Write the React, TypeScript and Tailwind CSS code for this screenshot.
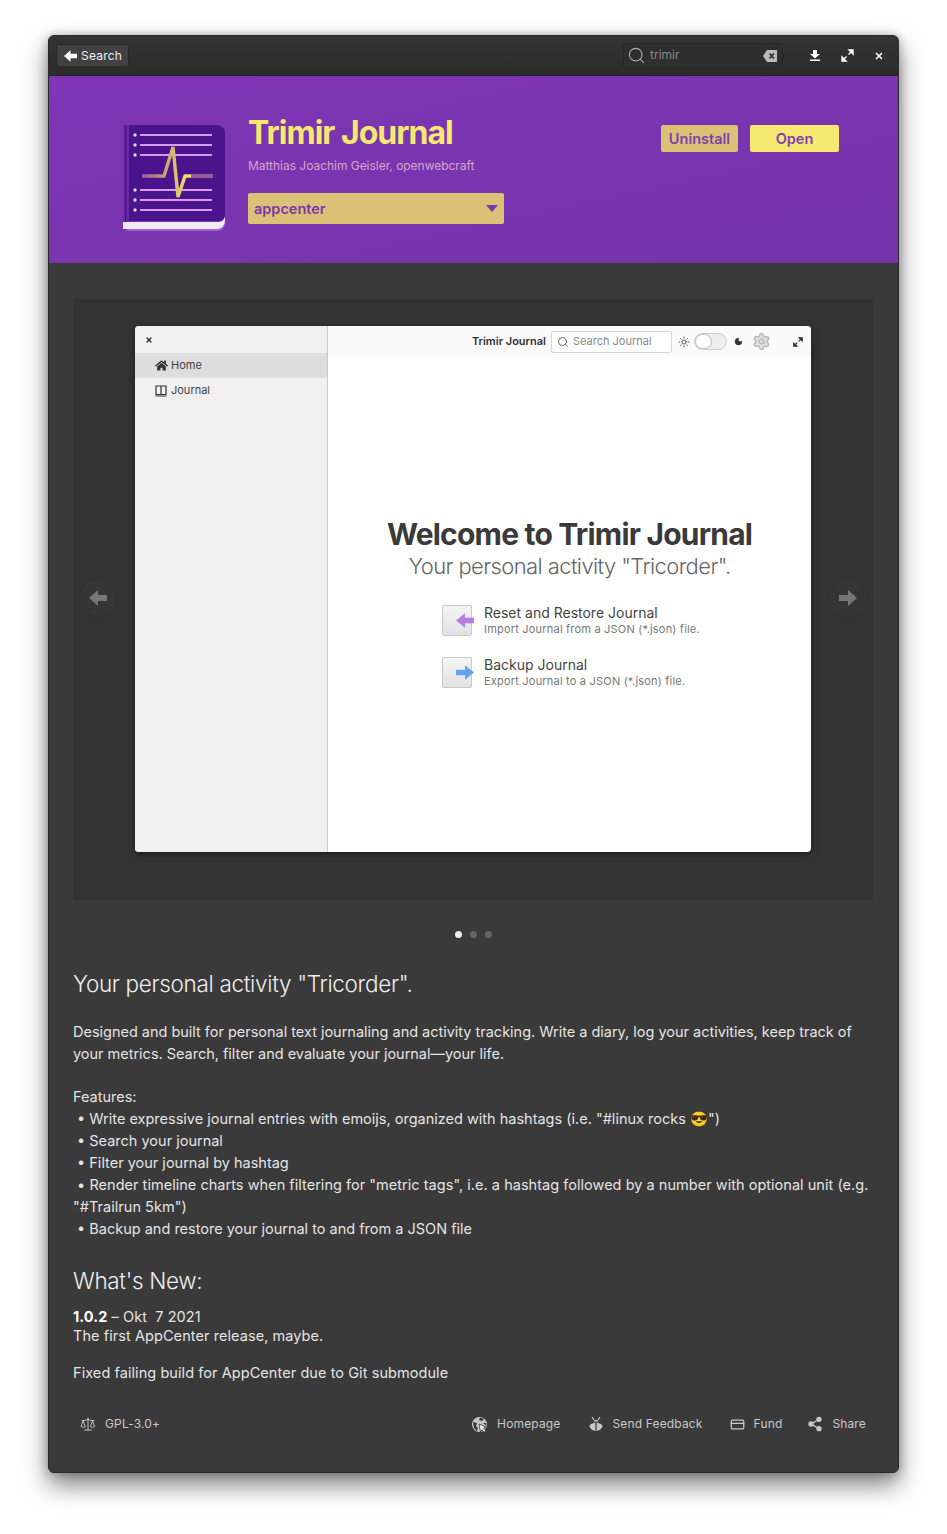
import { Search, X, Settings, Sun, Moon, Share2, CreditCard, Scale } from "lucide-react";
import { FaHome } from "react-icons/fa";

const features = [
  "Search your journal",
  "Filter your journal by hashtag",
];

function FatArrow({ right, width, height, color }: { right?: boolean; width: number; height: number; color: string }) {
  return (
    <svg width={width} height={height} viewBox="0 0 18 16" className={right ? "rotate-180" : ""}>
      <path d="M0 8L9 0V5H18V11H9V16Z" fill={color} />
    </svg>
  );
}

function BookIcon() {
  return (
    <svg width="104" height="108" viewBox="0 0 104 108" className="shrink-0">
      <defs>
        <linearGradient id="pulse" gradientUnits="userSpaceOnUse" x1="18" y1="0" x2="68" y2="0">
          <stop offset="0" stopColor="#9a5a9c" />
          <stop offset="0.5" stopColor="#c9a475" />
          <stop offset="0.8" stopColor="#e6cf68" />
          <stop offset="1" stopColor="#f5e66e" />
        </linearGradient>
      </defs>
      <path d="M4 100H92a9 9 0 0 0 10-9V99a8 8 0 0 1-9 7H4Z" fill="#a565cf" />
      <path d="M0 97H94a7 7 0 0 0 8-6V96a8 8 0 0 1-9 8H0Z" fill="#efeaf1" />
      <path d="M0 0H94a8 8 0 0 1 8 8V90a6 6 0 0 1-6 6H0Z" fill="#4a148c" />
      <rect x="0" y="0" width="6" height="97" fill="#6a2aa8" />
      <rect x="2" y="0" width="1.5" height="97" fill="#4a148c" />
      {[10, 20, 30, 65, 75, 85].map((y) => (
        <g key={y}>
          <circle cx="12" cy={y} r="1.7" fill="#e0d5ea" />
          <rect x="17" y={y - 1} width="72" height="2" fill="#d89bf0" />
        </g>
      ))}
      <rect x="68" y="49" width="22" height="4" fill="#965a95" />
      <path d="M19 51H41L50 22L55 72L62 51H68" fill="none" stroke="url(#pulse)" strokeWidth="3.4" />
    </svg>
  );
}

function NavArrow({ right }: { right?: boolean }) {
  return (
    <div className="mt-[18px] flex h-[38px] w-[38px] items-center justify-center rounded-full bg-[#353535] shadow-[0_0_1px_#2c2c2c]">
      <FatArrow right={right} width={18} height={16} color="#777777" />
    </div>
  );
}

function FooterLink({ icon, label }: { icon: React.ReactNode; label: string }) {
  return (
    <div className="flex items-center gap-[9px]">
      {icon}
      <span className="text-[12px] tracking-[0.15px] text-[#c8c8c8]">{label}</span>
    </div>
  );
}

function ActionRow({ title, sub, color, right }: { title: string; sub: string; color: string; right?: boolean }) {
  return (
    <div className="flex h-[32px] items-start gap-[12px] whitespace-nowrap">
      <div className="relative h-[31px] w-[30px] shrink-0 rounded-[2px] border border-[#c8c8c8] bg-gradient-to-b from-[#f4f4f4] to-[#e2e2e2]">
        <svg width="18" height="15" viewBox="0 0 20 16" className="absolute left-[13px] top-[7px]">
          {right ? (
            <path d="M0 5H10V0L20 8L10 16V11H0Z" fill={color} />
          ) : (
            <path d="M20 5H10V0L0 8L10 16V11H20Z" fill={color} />
          )}
        </svg>
      </div>
      <div>
        <div className="text-[14px] leading-[16px] text-[#444]">{title}</div>
        <div className="mt-[1px] text-[11px] leading-[14px] tracking-[0.2px] text-[#777]">{sub}</div>
      </div>
    </div>
  );
}

function ScreenshotWindow() {
  return (
    <div className="flex h-[526px] w-[676px] overflow-hidden rounded-[4px] bg-white shadow-[0_2px_6px_rgba(0,0,0,0.45)]">
      <div className="w-[193px] shrink-0 border-r border-[#c9c9c9] bg-[#f0f0f0] text-[11px] text-[#444]">
        <div className="flex h-[27px] items-center pl-[10px]">
          <X size={8} strokeWidth={4} className="text-[#333]" />
        </div>
        <div className="flex h-[25px] items-center gap-[3px] bg-[#dddddd] pl-[20px]">
          <FaHome size={13} className="text-[#333]" />
          <span>Home</span>
        </div>
        <div className="flex h-[25px] items-center gap-[4px] pl-[20px]">
          <svg width="12" height="12" viewBox="0 0 12 12" fill="none" stroke="#333" strokeWidth="1.2">
            <path d="M1 1H11V9.5H1ZM6 1V9.5M0.5 11H11.5" />
          </svg>
          <span>Journal</span>
        </div>
      </div>
      <div className="flex min-w-0 flex-1 flex-col">
        <div className="flex h-[31px] items-center justify-end bg-[#fafafa] pr-[8px]">
          <span className="mr-[5px] text-[11px] font-semibold text-[#333]">Trimir Journal</span>
          <div className="flex h-[22px] w-[121px] items-center gap-[4px] rounded-[2px] border border-[#d5d5d5] bg-white pl-[5px]">
            <Search size={12} className="text-[#666]" />
            <span className="text-[11px] text-[#888]">Search Journal</span>
          </div>
          <Sun size={12} className="ml-[6px] text-[#555]" />
          <div className="ml-[4px] flex h-[17px] w-[33px] items-center rounded-full border border-[#ccc] bg-[#eee]">
            <div className="h-[15px] w-[17px] rounded-full border border-[#bbb] bg-white" />
          </div>
          <Moon size={9} fill="#333" className="ml-[7px] text-[#333]" />
          <Settings size={19} fill="#e2e2e2" className="ml-[9px] text-[#bbb]" />
          <svg width="10" height="10" viewBox="0 0 13 13" fill="#333" stroke="#333" strokeWidth="1.6" className="ml-[22px]">
            <path d="M8 1H12V5ZM1 8V12H5ZM10 3L7.5 5.5M3 10L5.5 7.5" />
          </svg>
        </div>
        <div className="flex flex-1 flex-col items-center pt-[159px]">
          <h2 className="text-[30px] font-bold leading-[36px] tracking-[-0.8px] text-[#3a3a3a]">Welcome to Trimir Journal</h2>
          <p className="text-[22px] font-light leading-[28px] tracking-[-0.6px] text-[#666]">Your personal activity "Tricorder".</p>
          <div className="mt-[25px] ml-[114px] flex w-[258px] flex-col gap-[20px] self-start">
            <ActionRow color="#b57ee5" title="Reset and Restore Journal" sub="Import Journal from a JSON (*.json) file." />
            <ActionRow right color="#64a4ed" title="Backup Journal" sub="Export Journal to a JSON (*.json) file." />
          </div>
        </div>
      </div>
    </div>
  );
}

export default function App() {
  return (
    <div className="min-h-[1534px] bg-white pl-[48px] pt-[35px] font-['Inter',sans-serif]">
      <div className="flex h-[1438px] w-[851px] flex-col overflow-hidden rounded-[6px] border border-[#2a2a2a] bg-[#3a3a3a] shadow-[0_12px_24px_rgba(0,0,0,0.5),0_0_10px_rgba(0,0,0,0.25)]">
        {/* titlebar */}
        <div className="flex h-[40px] shrink-0 items-center justify-between border-b border-[#27212b] bg-gradient-to-b from-[#343434] to-[#2b2b2b] pl-[7px] pr-[14px]">
          <button className="flex h-[23px] w-[73px] items-center gap-[4px] rounded-[3px] border border-[#282828] bg-[#414141] pl-[7px] text-[12px] tracking-[0.2px] text-[#eee]">
            <FatArrow width={13} height={12} color="#ffffff" />
            <span>Search</span>
          </button>
          <div className="flex items-center">
            <div className="flex h-[26px] w-[160px] items-center rounded-[3px] border border-[#262626] bg-[#2e2e2e] pl-[3px] pr-[5px]">
              <Search size={19} strokeWidth={1.4} className="text-[#aaa]" />
              <span className="ml-[4px] mt-[-1px] flex-1 text-[12px] text-[#8a8a8a]">trimir</span>
              <svg width="14" height="12" viewBox="0 0 14 12">
                <path d="M4 0H14V12H4L0 6Z" fill="#bbbbbb" />
                <path d="M6.5 3.5L11 8.5M11 3.5L6.5 8.5" stroke="#2e2e2e" strokeWidth="1.8" />
              </svg>
            </div>
            <svg width="10" height="11" viewBox="0 0 10 11" className="ml-[27px]">
              <path d="M3 0H7V4H10L5 8.5L0 4H3Z" fill="#ffffff" />
              <rect x="0" y="9.5" width="10" height="1.5" fill="#ffffff" />
            </svg>
            <svg width="13" height="13" viewBox="0 0 13 13" fill="#ffffff" stroke="#ffffff" strokeWidth="1.4" className="ml-[21px]">
              <path d="M8 1H12V5ZM1 8V12H5ZM10 3L7.5 5.5M3 10L5.5 7.5" />
            </svg>
            <X size={10} strokeWidth={4} className="ml-[20px] text-white" />
          </div>
        </div>
        {/* banner */}
        <div className="flex h-[187px] shrink-0 bg-gradient-to-br from-[#7f35b6] to-[#7534aa] pl-[74px] pr-[59px] pt-[49px]">
          <BookIcon />
          <div className="ml-[21px] flex-1">
            <h1 className="mt-[-11px] text-[32px] font-bold leading-[38px] tracking-[-1px] text-[#f5e86e]">Trimir Journal</h1>
            <p className="mt-[6px] text-[12px] leading-[16px] tracking-[-0.03px] text-[#d3a6c8]">Matthias Joachim Geisler, openwebcraft</p>
            <div className="mt-[19px] flex h-[31px] w-[256px] items-center justify-between rounded-[2px] bg-[#dbc175] pl-[6px] pr-[6px] text-[14.5px] font-semibold text-[#7b35ad]">
              <span>appcenter</span>
              <svg width="12" height="7" viewBox="0 0 12 7"><path d="M0 0H12L6 7Z" fill="#7b35ad" /></svg>
            </div>
          </div>
          <div className="flex items-start gap-[12px]">
            <div className="flex h-[27px] w-[77px] items-center justify-center rounded-[2px] bg-[#dcc278] text-[14.5px] font-semibold text-[#7f3fb0]">Uninstall</div>
            <div className="flex h-[27px] w-[89px] items-center justify-center rounded-[2px] bg-[#f6e870] text-[14.5px] font-semibold text-[#7f3fb0]">Open</div>
          </div>
        </div>
        {/* body */}
        <div className="flex flex-1 flex-col pl-[24px] pr-[25px] pt-[36px]">
          <div className="flex h-[601px] items-center justify-between bg-[#333333] px-[6px] pb-[21px]">
            <NavArrow />
            <ScreenshotWindow />
            <NavArrow right />
          </div>
          <div className="mt-[31px] flex justify-center gap-[8px]">
            <span className="h-[7px] w-[7px] rounded-full bg-[#eeeeee]" />
            <span className="h-[7px] w-[7px] rounded-full bg-[#666]" />
            <span className="h-[7px] w-[7px] rounded-full bg-[#666]" />
          </div>
          <h3 className="mt-[30px] text-[22.5px] font-light leading-[32px] tracking-[-0.33px] text-[#eeeeee]">Your personal activity "Tricorder".</h3>
          <div className="mt-[21px] text-[14.5px] leading-[22px] text-[#e4e4e4]">
            <p className="tracking-[-0.015px]">Designed and built for personal text journaling and activity tracking. Write a diary, log your activities, keep track of your metrics. Search, filter and evaluate your journal—your life.</p>
            <p className="mt-[21px]">Features:</p>
            <p>&nbsp;• Write expressive journal entries with emoijs, organized with hashtags (i.e. "#linux rocks 😎")</p>
            {features.map((f) => (
              <p key={f}>&nbsp;• {f}</p>
            ))}
            <p className="tracking-[0.03px]">&nbsp;• Render timeline charts when filtering for "metric tags", i.e. a hashtag followed by a number with optional unit (e.g. "#Trailrun 5km")</p>
            <p>&nbsp;• Backup and restore your journal to and from a JSON file</p>
          </div>
          <h3 className="mt-[25px] text-[22.5px] font-light leading-[32px] tracking-[-0.33px] text-[#eeeeee]">What's New:</h3>
          <div className="mt-[10px] text-[14.5px] leading-[19px] tracking-[0.07px] text-[#e4e4e4]">
            <p><b className="font-bold text-white">1.0.2</b> – Okt&nbsp; 7 2021</p>
            <p>The first AppCenter release, maybe.</p>
            <p className="mt-[18px]">Fixed failing build for AppCenter due to Git submodule</p>
          </div>
          <div className="mt-[33px] flex items-center justify-between pl-[7px] pr-[7px]">
            <FooterLink icon={<Scale size={16} strokeWidth={1.4} className="text-[#c8c8c8]" />} label="GPL-3.0+" />
            <div className="flex items-center gap-[27px]">
              <FooterLink
                label="Homepage"
                icon={
                  <svg width="17" height="17" viewBox="0 0 17 17">
                    <circle cx="8.5" cy="8.5" r="7.5" fill="#c8c8c8" />
                    <path d="M2 6l4 1-1 3 2 2-1 3-3-3zM9 1.5l4 1.5-2 2-3-1zM12 7l3 0 0.5 3z" fill="#3a3a3a" />
                    <path d="M8 8l7 3-2.5 1.2 2.3 2.6-1.7 1.5-2.2-2.6-1.4 2.3Z" fill="#eeeeee" stroke="#3a3a3a" strokeWidth="0.8" />
                  </svg>
                }
              />
              <FooterLink
                label="Send Feedback"
                icon={
                  <svg width="16" height="16" viewBox="0 0 16 16" fill="none" stroke="#c8c8c8" strokeWidth="1.2">
                    <path d="M4 1L6 4M12 1L10 4" />
                    <path d="M5 5.5Q8 2 11 5.5Z" fill="#c8c8c8" stroke="none" />
                    <path d="M7.4 6.5V15C4 14.5 1.6 12 1.6 10S4.5 7.5 7.4 6.5ZM8.6 6.5V15C12 14.5 14.4 12 14.4 10S11.5 7.5 8.6 6.5Z" fill="#c8c8c8" stroke="none" />
                  </svg>
                }
              />
              <FooterLink label="Fund" icon={<CreditCard size={15} className="text-[#c8c8c8]" />} />
              <div className="-ml-[2px]">
                <FooterLink label="Share" icon={<Share2 size={16} fill="#c8c8c8" className="text-[#c8c8c8]" />} />
              </div>
            </div>
          </div>
        </div>
      </div>
    </div>
  );
}
